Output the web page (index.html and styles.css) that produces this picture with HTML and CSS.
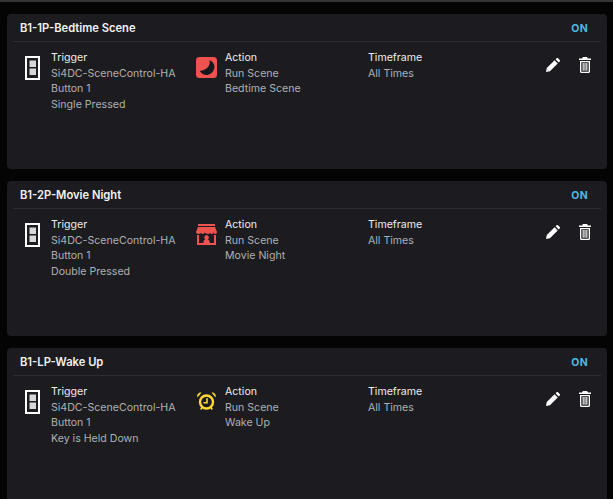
FILE: index.html
```html
<!DOCTYPE html>
<html lang="en">
<head>
<meta charset="utf-8">
<title>Automations</title>
<link rel="stylesheet" href="styles.css">
</head>
<body>
<svg class="defs" aria-hidden="true">
  <symbol id="switch" viewBox="0 0 15 24"><path fill="#fff" fill-rule="evenodd" d="M0 0h15v24H0zM2 2v20h11V2z"/><rect x="4.500" y="4.500" width="6.500" height="6.500" fill="#d8d8d8"/><rect x="4.500" y="12.500" width="6.500" height="6.500" fill="#d8d8d8"/></symbol>
  <symbol id="pencil" viewBox="0 0 14 14"><path fill="#fff" d="M0 14l.8-3.900L8.600 2.300l3.100 3.100-7.800 7.800zM9.600 1.300l1-1c.4-.4 1-.4 1.400 0l1.700 1.700c.4.400.4 1 0 1.400l-1 1z"/></symbol>
  <symbol id="trash" viewBox="0 0 12 16"><path fill="#fff" fill-rule="evenodd" d="M4 0h4l1 1.500h3V3H0V1.500h3zM1 4h10v10.500c0 .9-.6 1.500-1.500 1.500h-7C1.600 16 1 15.400 1 14.500zM2.300 5.200v9c0 .3.200.5.500.5h6.400c.3 0 .5-.2.500-.5v-9zM3.600 6h1.100v7.800H3.600zM5.450 6h1.100v7.800h-1.100zM7.300 6h1.100v7.800H7.300z"/></symbol>
</svg>
<div class="list">
  <section class="card">
    <header class="head"><h2>B1-1P-Bedtime Scene</h2><span class="state">ON</span></header>
    <div class="body">
      <div class="col col-trigger">
        <svg class="icon"><use href="#switch"/></svg>
        <div class="text"><h3>Trigger</h3><p>Si4DC-SceneControl-HA</p><p>Button 1</p><p>Single Pressed</p></div>
      </div>
      <div class="col col-action">
        <svg class="icon act" viewBox="0 0 21 21"><rect width="21" height="21" rx="3.500" fill="#ef5350"/><path fill="#17181c" d="M13.500 3c1.500 5-2.600 10.500-9.800 11C6 17.500 9.500 18.500 12.300 17.700 17 16.300 19.300 11.800 18.200 8 17.400 5.800 15.800 4 13.500 3z"/></svg>
        <div class="text"><h3>Action</h3><p>Run Scene</p><p>Bedtime Scene</p></div>
      </div>
      <div class="col col-time"><div class="text"><h3>Timeframe</h3><p>All Times</p></div></div>
      <div class="tools">
        <svg class="tool"><use href="#pencil"/></svg>
        <svg class="tool trash"><use href="#trash"/></svg>
      </div>
    </div>
  </section>
  <section class="card">
    <header class="head"><h2>B1-2P-Movie Night</h2><span class="state">ON</span></header>
    <div class="body">
      <div class="col col-trigger">
        <svg class="icon"><use href="#switch"/></svg>
        <div class="text"><h3>Trigger</h3><p>Si4DC-SceneControl-HA</p><p>Button 1</p><p>Double Pressed</p></div>
      </div>
      <div class="col col-action">
        <svg class="icon act" viewBox="0 0 21 21"><path fill="#ef5350" d="M2 0h17v2H2zM2 3h17l2 5c0 1-1 2-1.800 2-.9 0-1.700-.7-1.700-1.700 0 1-.8 1.700-1.700 1.700s-1.800-.7-1.800-1.700c0 1-.8 1.700-1.700 1.700S8.600 9.300 8.600 8.300c0 1-.8 1.700-1.800 1.700S5.100 9.300 5.100 8.300C5.100 9.300 4 10 3 10 1.200 10 0 9 0 8z"/><path fill="#ef5350" d="M1 11h2v8h4.300c0-2 1-3.200 2-3.700a2.200 2.200 0 1 1 2.500 0c1 .5 2 1.700 2 3.700H18v-8h2v10H1z"/></svg>
        <div class="text"><h3>Action</h3><p>Run Scene</p><p>Movie Night</p></div>
      </div>
      <div class="col col-time"><div class="text"><h3>Timeframe</h3><p>All Times</p></div></div>
      <div class="tools">
        <svg class="tool"><use href="#pencil"/></svg>
        <svg class="tool trash"><use href="#trash"/></svg>
      </div>
    </div>
  </section>
  <section class="card">
    <header class="head"><h2>B1-LP-Wake Up</h2><span class="state">ON</span></header>
    <div class="body">
      <div class="col col-trigger">
        <svg class="icon"><use href="#switch"/></svg>
        <div class="text"><h3>Trigger</h3><p>Si4DC-SceneControl-HA</p><p>Button 1</p><p>Key is Held Down</p></div>
      </div>
      <div class="col col-action">
        <svg class="icon act" viewBox="0 0 21 21"><circle cx="10.500" cy="11" r="6.500" fill="none" stroke="#fdd835" stroke-width="2.400"/><path fill="none" stroke="#fdd835" stroke-width="1.600" d="M11 7.200V11.800H7.500"/><path fill="#fdd835" d="M1.500 6.500C.5 3.500 2.500 1 5.500 1.500zM19.500 6.500c1-3-1-5.500-4-5z"/><path stroke="#fdd835" stroke-width="1.600" d="M6 16.500 4.800 18.500M15 16.500l1.200 2"/></svg>
        <div class="text"><h3>Action</h3><p>Run Scene</p><p>Wake Up</p></div>
      </div>
      <div class="col col-time"><div class="text"><h3>Timeframe</h3><p>All Times</p></div></div>
      <div class="tools">
        <svg class="tool"><use href="#pencil"/></svg>
        <svg class="tool trash"><use href="#trash"/></svg>
      </div>
    </div>
  </section>
</div>
</body>
</html>
```
FILE: styles.css
```css
* { box-sizing: border-box; }
html, body { margin: 0; height: 100%; overflow: hidden; }
body {
  background: #040404;
  border-top: 2px solid #343436;
  font-family: Inter, "Liberation Sans", sans-serif;
  color: #fff;
}
.defs { display: none; }
.list { display: flex; flex-direction: column; gap: 12px; padding: 12px 6px 0 7px; }
.card { height: 155px; flex: none; background: #1c1c20; border-radius: 4px; padding: 0 6px; }
.head {
  display: flex; justify-content: space-between; align-items: center;
  height: 28px; border-bottom: 1px solid #2d2d31; padding: 1px 13px 0 7px;
}
h2 { margin: 0; font-size: 11.200px; font-weight: 600; color: #f2f2f2; }
.state { font-size: 10.500px; font-weight: 700; color: #4bb8e0; letter-spacing: .3px; }
.body { display: flex; padding: 8px 0 0 12px; }
.col { display: flex; }
.col-trigger { width: 171px; }
.col-action { width: 172px; }
.icon { width: 15px; height: 24px; margin: 6px 11px 0 0; flex: none; }
.act { width: 21px; height: 21px; margin: 7px 8px 0 0; }
.col-time { flex: 1; }
h3 { margin: 0; font-size: 10.600px; font-weight: 400; line-height: 15.600px; color: #ededed; }
p { margin: 0; font-size: 10.600px; line-height: 15.600px; color: #b0b0b0; }
.tools { display: flex; gap: 19px; align-items: flex-start; padding: 7px 10px 0 0; }
.tool { width: 14px; height: 14px; margin-top: 1px; }
.trash { width: 12px; height: 16px; margin-top: 0; }
```
